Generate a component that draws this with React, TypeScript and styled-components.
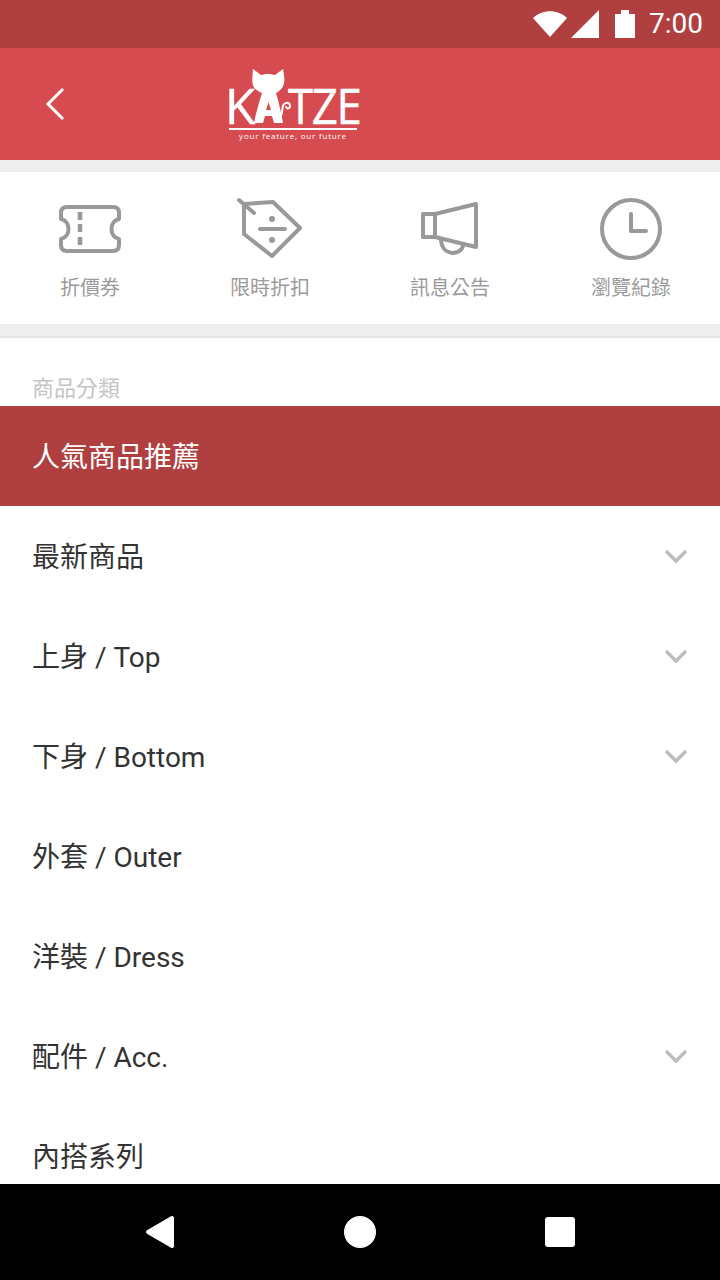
import React from "react";
import styled, { createGlobalStyle } from "styled-components";

const Global = createGlobalStyle`
  html, body { margin: 0; padding: 0; background: #fff; }
  * { box-sizing: border-box; }
`;

const Screen = styled.div`
  width: 720px;
  height: 1280px;
  display: flex;
  flex-direction: column;
  overflow: hidden;
  background: #fff;
  font-family: Roboto, "Noto Sans CJK TC", sans-serif;
`;

const StatusBar = styled.div`
  height: 48px;
  flex: none;
  background: #b03f3f;
  display: flex;
  align-items: center;
  justify-content: flex-end;
  padding-right: 17px;
  color: #fff;
`;

const StatusTime = styled.span`
  font-size: 28px;
  font-weight: 400;
  margin-left: 14px;
  line-height: 48px;
`;

const StatusIcon = styled.svg<{ $gap?: number }>`
  display: block;
  flex: none;
  margin-left: ${(p) => p.$gap ?? 0}px;
`;

const Header = styled.header`
  height: 112px;
  flex: none;
  background: #d64b50;
  display: flex;
  align-items: center;
  padding-left: 44px;
`;

const BackIcon = styled.svg`
  display: block;
  flex: none;
`;

const Logo = styled.div`
  margin-left: 160px;
  width: 134px;
  display: flex;
  flex-direction: column;
  color: #fff;
`;

const LogoWord = styled.div`
  position: relative;
  height: 60px;
  display: flex;
  align-items: flex-end;
  padding-bottom: 5px;
  font-family: "Open Sans", "Liberation Sans", sans-serif;
  font-size: 49px;
  font-weight: 400;
  line-height: 36px;
  -webkit-text-stroke: 0.5px #fff;
`;

const LogoLetterK = styled.span`
  display: block;
  width: 58px;
  height: 36px;
  margin-left: -3px;
  flex: none;
`;

const LogoLetters = styled.span`
  display: block;
  height: 36px;
  margin-left: 5px;
  letter-spacing: -1.500px;
  white-space: nowrap;
  transform: scaleX(0.93);
  transform-origin: left center;
`;

const LogoCat = styled.svg`
  position: absolute;
  left: 22px;
  top: 0;
`;

const LogoRule = styled.div`
  height: 2px;
  width: 128px;
  margin-left: 1px;
  background: #fff;
`;

const LogoTag = styled.div`
  font-family: "Open Sans", "Liberation Sans", sans-serif;
  font-size: 8px;
  font-weight: 400;
  line-height: 10px;
  letter-spacing: 0.8px;
  text-align: center;
  width: 130px;
  margin-top: 1px;
  white-space: nowrap;
`;

const Divider = styled.div`
  height: 12px;
  flex: none;
  background: #eeeeee;
`;

const Shortcuts = styled.nav`
  height: 152px;
  flex: none;
  display: grid;
  grid-template-columns: repeat(4, 180px);
  background: #fff;
`;

const Shortcut = styled.div<{ $inset?: number }>`
  display: flex;
  flex-direction: column;
  align-items: center;
  padding-top: 24px;
  padding-left: ${(p) => p.$inset ?? 0}px;
`;

const ShortcutIcon = styled.svg`
  display: block;
  width: 68px;
  height: 68px;
`;

const ShortcutLabel = styled.span`
  font-size: 20px;
  line-height: 28px;
  margin-top: 10px;
  color: #9b9b9b;
`;

const SectionDivider = styled(Divider)`
  height: 14px;
  border-bottom: 2px solid #e4e4e4;
`;

const Menu = styled.div`
  flex: 1;
  min-height: 0;
  overflow: hidden;
`;

const SectionTitle = styled.div`
  height: 68px;
  padding: 35px 0 0 32px;
  font-size: 22px;
  line-height: 32px;
  color: #c4c4c4;
`;

const Row = styled.div<{ $active?: boolean }>`
  height: 100px;
  display: flex;
  align-items: center;
  justify-content: space-between;
  padding: 0 32px 2px;
  font-size: 28px;
  color: ${(p) => (p.$active ? "#fff" : "#333333")};
  background: ${(p) => (p.$active ? "#b03f3f" : "#fff")};
`;

const Chevron = styled.svg`
  display: block;
  margin-top: 1px;
`;

const NavBar = styled.div`
  height: 96px;
  flex: none;
  background: #000;
  display: grid;
  grid-template-columns: repeat(3, 200px);
  justify-content: center;
  align-items: center;
  justify-items: center;
`;

const NavIcon = styled.svg`
  display: block;
  fill: #fff;
`;

const stroke = {
  fill: "none",
  stroke: "#999",
  strokeWidth: 4,
  strokeLinejoin: "round" as const,
  strokeLinecap: "round" as const,
};

const items: { label: string; chevron?: boolean; active?: boolean }[] = [
  { label: "人氣商品推薦", active: true },
  { label: "最新商品", chevron: true },
  { label: "上身 / Top", chevron: true },
  { label: "下身 / Bottom", chevron: true },
  { label: "外套 / Outer" },
  { label: "洋裝 / Dress" },
  { label: "配件 / Acc.", chevron: true },
  { label: "內搭系列" },
];

export default function App() {
  return (
    <Screen>
      <Global />
      <StatusBar>
        <StatusIcon width="34" height="26" viewBox="0 0 34 26">
          <path d="M0 7 C9 -2 25 -2 34 7 L17 26Z" fill="#fff" />
        </StatusIcon>
        <StatusIcon $gap={4} width="28" height="28" viewBox="0 0 28 28">
          <path d="M0 28 L28 0 V28Z" fill="#fff" />
        </StatusIcon>
        <StatusIcon $gap={16} width="20" height="28" viewBox="0 0 20 28">
          <path d="M0 4 H6 V0 H14 V4 H20 V28 H0Z" fill="#fff" />
        </StatusIcon>
        <StatusTime>7:00</StatusTime>
      </StatusBar>
      <Header>
        <BackIcon width="24" height="36" viewBox="0 0 24 36">
          <path d="M19 3 L4 18 L19 33" fill="none" stroke="#fff" strokeWidth="3" />
        </BackIcon>
        <Logo>
          <LogoWord>
            <LogoLetterK>K</LogoLetterK>
            <LogoLetters>TZE</LogoLetters>
            <LogoCat width="42" height="56" viewBox="0 0 42 56">
              <path
                d="M3 1 L11 7 C15 5.500 21 5.500 25 7 L33 1 C34 7 35 11 34 15 C33 20 30 23 26 25 C29 34 31 45 33 55 L24 55 L22 48 L15 48 L13 55 L4 55 C6 45 9 34 12 25 C7 23 3 20 2.500 15 C2 11 2.500 7 3 1Z"
                fill="#fff"
              />
              <path d="M18.500 34 L21 42 L16 42Z" fill="#d64b50" />
              <path
                d="M28 53 C32 49 32 44 32.500 40 C33 34 40 33 40 38 C40 41 37 41 36 39"
                fill="none"
                stroke="#fff"
                strokeWidth="2"
                strokeLinecap="round"
              />
            </LogoCat>
          </LogoWord>
          <LogoRule />
          <LogoTag>your feature, our future</LogoTag>
        </Logo>
      </Header>
      <Divider />
      <Shortcuts>
        <Shortcut>
          <ShortcutIcon viewBox="0 0 68 68">
            <path
              {...stroke}
              d="M11 11 H57 Q63 11 63 17 V23 C53 25 53 41 63 43 V49 Q63 55 57 55 H11 Q5 55 5 49 V43 C15 41 15 25 5 23 V17 Q5 11 11 11Z"
            />
            <path {...stroke} strokeWidth={4.500} strokeLinecap="butt" d="M24 16 V24 M24 28 V36 M24 41 V49" />
          </ShortcutIcon>
          <ShortcutLabel>折價券</ShortcutLabel>
        </Shortcut>
        <Shortcut>
          <ShortcutIcon viewBox="0 0 68 68">
            <path {...stroke} d="M8 8 L37 6 L64 32 L36 60 L8 38Z" />
            <path {...stroke} d="M3 4 L18 17 M24 33 H49" />
            <circle cx="36" cy="23" r="3" fill="#999" />
            <circle cx="36" cy="44" r="3" fill="#999" />
          </ShortcutIcon>
          <ShortcutLabel>限時折扣</ShortcutLabel>
        </Shortcut>
        <Shortcut>
          <ShortcutIcon viewBox="0 0 68 68">
            <path {...stroke} d="M7 18 H19 L60 8 V51 L19 41 H7Z" />
            <path {...stroke} d="M19 18 V41" />
            <path {...stroke} d="M25 44 C26 60 44 60 47 50" />
          </ShortcutIcon>
          <ShortcutLabel>訊息公告</ShortcutLabel>
        </Shortcut>
        <Shortcut $inset={2}>
          <ShortcutIcon viewBox="0 0 68 68">
            <circle cx="34" cy="33" r="29" fill="none" stroke="#999" strokeWidth="4" />
            <path {...stroke} d="M34 18 V35 H49" />
          </ShortcutIcon>
          <ShortcutLabel>瀏覽紀錄</ShortcutLabel>
        </Shortcut>
      </Shortcuts>
      <SectionDivider />
      <Menu>
        <SectionTitle>商品分類</SectionTitle>
        {items.map((it) => (
          <Row key={it.label} $active={it.active}>
            <span>{it.label}</span>
            {it.chevron && (
              <Chevron width="24" height="14" viewBox="0 0 24 14">
                <path d="M2 2 L12 12 L22 2" fill="none" stroke="#bdbdbd" strokeWidth="3.5" />
              </Chevron>
            )}
          </Row>
        ))}
      </Menu>
      <NavBar>
        <NavIcon width="30" height="34" viewBox="0 0 30 34">
          <path d="M27 3 V31 L3 17Z" stroke="#fff" strokeWidth="4" strokeLinejoin="round" />
        </NavIcon>
        <NavIcon width="32" height="32" viewBox="0 0 32 32">
          <circle cx="16" cy="16" r="16" />
        </NavIcon>
        <NavIcon width="30" height="30" viewBox="0 0 30 30">
          <rect width="30" height="30" rx="3" />
        </NavIcon>
      </NavBar>
    </Screen>
  );
}
